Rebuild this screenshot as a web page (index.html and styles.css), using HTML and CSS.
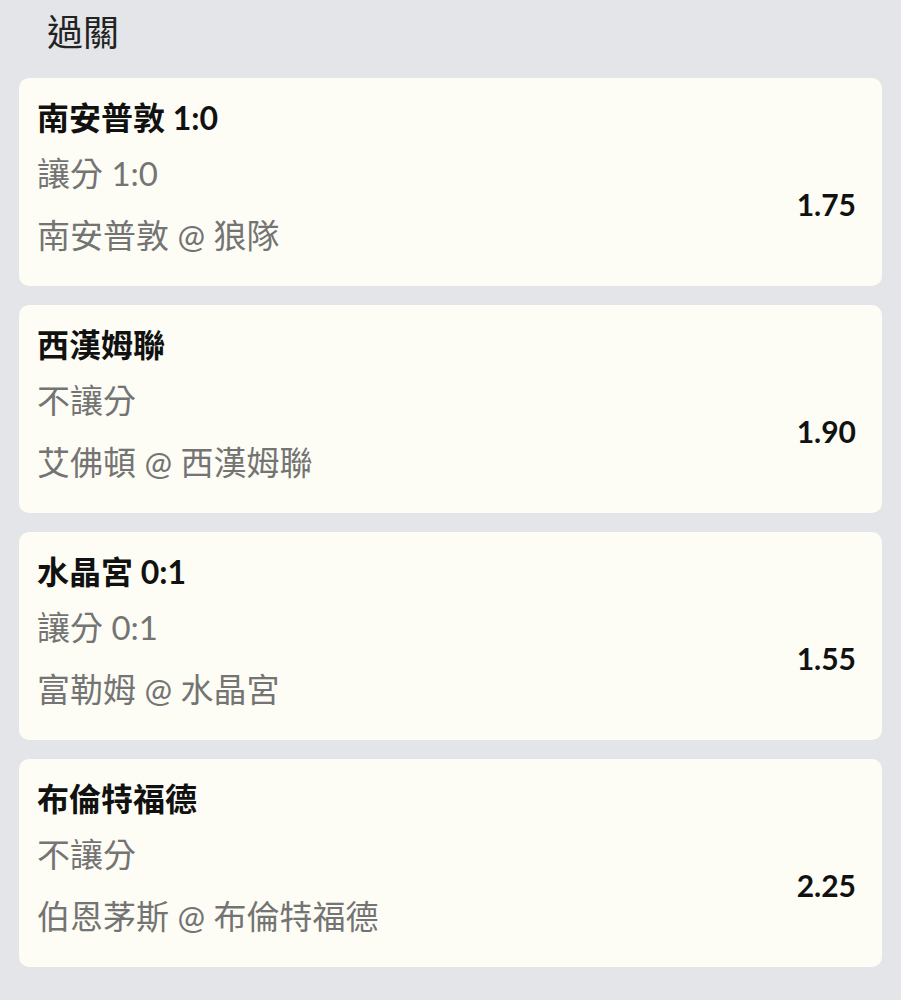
FILE: index.html
```html
<!DOCTYPE html>
<html lang="zh-Hant">
<head>
    <meta charset="UTF-8">
    <meta name="viewport" content="width=device-width, initial-scale=1.0">
    <title>過關</title>
    <link rel="stylesheet" href="styles.css">
</head>
<body>
    <div class="page">
        <h1 class="page-title">過關</h1>

        <!-- Parlay legs -->
        <div class="leg-list">
            <div class="leg">
                <div class="leg-pick">南安普敦 1:0</div>
                <div class="leg-body">
                    <div class="leg-info">
                        <div class="leg-market">讓分 1:0</div>
                        <div class="leg-match">南安普敦 @ 狼隊</div>
                    </div>
                    <div class="leg-odds">1.75</div>
                </div>
            </div>

            <div class="leg">
                <div class="leg-pick">西漢姆聯</div>
                <div class="leg-body">
                    <div class="leg-info">
                        <div class="leg-market">不讓分</div>
                        <div class="leg-match">艾佛頓 @ 西漢姆聯</div>
                    </div>
                    <div class="leg-odds">1.90</div>
                </div>
            </div>

            <div class="leg">
                <div class="leg-pick">水晶宮 0:1</div>
                <div class="leg-body">
                    <div class="leg-info">
                        <div class="leg-market">讓分 0:1</div>
                        <div class="leg-match">富勒姆 @ 水晶宮</div>
                    </div>
                    <div class="leg-odds">1.55</div>
                </div>
            </div>

            <div class="leg">
                <div class="leg-pick">布倫特福德</div>
                <div class="leg-body">
                    <div class="leg-info">
                        <div class="leg-market">不讓分</div>
                        <div class="leg-match">伯恩茅斯 @ 布倫特福德</div>
                    </div>
                    <div class="leg-odds">2.25</div>
                </div>
            </div>
        </div>
    </div>
</body>
</html>
```

FILE: styles.css
```css
body {
    margin: 0;
    padding: 0;
    background-color: #e4e5e8;
    font-family: Lato, "Noto Sans CJK TC", sans-serif;
    color: #111;
}

.page {
    padding: 0 19px 30px 19px;
}

.page-title {
    margin: 0 0 14px 0;
    padding-left: 28px;
    font-size: 36px;
    font-weight: normal;
    line-height: 64px;
    color: #222;
}

.leg-list {
    display: flex;
    flex-direction: column;
    gap: 19px;
}

.leg {
    background-color: #fdfdf5;
    border-radius: 10px;
    padding: 16px 26px 28px 18px;
    height: 208px;
    box-sizing: border-box;
}

.leg-pick {
    font-size: 32px;
    font-weight: bold;
    line-height: 48px;
    color: #111;
}

.leg-body {
    display: flex;
    justify-content: space-between;
    align-items: center;
}

.leg-info {
    display: flex;
    flex-direction: column;
    gap: 16px;
    padding-top: 8px;
}

.leg-market,
.leg-match {
    font-size: 33px;
    line-height: 46px;
    color: #747474;
}

.leg-odds {
    font-size: 30px;
    font-weight: bold;
    color: #111;
    padding-top: 8px;
}
```
